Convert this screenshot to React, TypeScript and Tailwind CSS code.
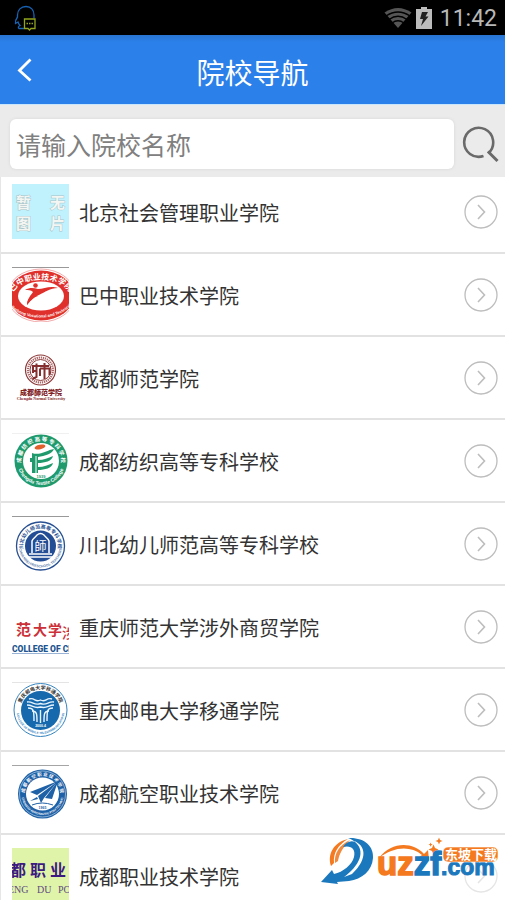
import type { ReactNode } from 'react'

type RingTextProps = {
  id: string
  cx: number
  cy: number
  topRadius: number
  bottomRadius: number
  top: string
  bottom: string
  topFill: string
  bottomFill: string
  topSize: number
  bottomSize: number
}

const RingText = (p: RingTextProps) => (
  <g textAnchor="middle" fontWeight="700">
    <path
      id={`${p.id}-top`}
      fill="none"
      d={`M${p.cx} ${p.cy + p.topRadius}A${p.topRadius} ${p.topRadius} 0 0 1 ${p.cx} ${p.cy - p.topRadius}A${p.topRadius} ${p.topRadius} 0 0 1 ${p.cx} ${p.cy + p.topRadius}`}
    />
    <path
      id={`${p.id}-bottom`}
      fill="none"
      d={`M${p.cx - p.bottomRadius} ${p.cy}A${p.bottomRadius} ${p.bottomRadius} 0 0 0 ${p.cx + p.bottomRadius} ${p.cy}`}
    />
    <text fontFamily="Noto Sans CJK SC, sans-serif" fontSize={p.topSize} fill={p.topFill}>
      <textPath href={`#${p.id}-top`} startOffset="50%">
        {p.top}
      </textPath>
    </text>
    <text fontFamily="Liberation Sans, sans-serif" fontSize={p.bottomSize} fill={p.bottomFill}>
      <textPath href={`#${p.id}-bottom`} startOffset="50%">
        {p.bottom}
      </textPath>
    </text>
  </g>
)

const Logo = ({ children }: { children: ReactNode }) => (
  <svg viewBox="0 0 57 55" className="h-[55px] w-[57px] shrink-0" aria-hidden="true">
    {children}
  </svg>
)

const EmptyLogo = () => (
  <Logo>
    <rect width="57" height="55" fill="#c0f2fe" />
    <g fontFamily="Noto Sans CJK SC, sans-serif" fontSize="15" fontWeight="700">
      <g fill="#f3f6f2" stroke="#a9c3c8" strokeWidth="1" paintOrder="stroke">
        <text x="4" y="24">暂</text>
        <text x="38" y="24">无</text>
        <text x="4" y="45">图</text>
        <text x="38" y="45">片</text>
      </g>
    </g>
  </Logo>
)

const BazhongLogo = () => (
  <Logo>
    <path d="M0 .5h57" stroke="#999" />
    <ellipse cx="29" cy="28.500" rx="34" ry="26.500" fill="#fff" stroke="#e88" strokeWidth=".7" />
    <ellipse cx="29" cy="28.500" rx="32.500" ry="25" fill="#e0302c" />
    <ellipse cx="29" cy="29" rx="23" ry="14.500" fill="#fff" />
    <path id="bz-top" fill="none" d="M0 27C8 8 50 8 58 27" />
    <path id="bz-bottom" fill="none" d="M-3 38C10 55 48 55 61 36" />
    <text fontFamily="Noto Sans CJK SC, sans-serif" fontSize="8" fontWeight="700" fill="#fff" textAnchor="middle">
      <textPath href="#bz-top" startOffset="50%">巴中职业技术学院</textPath>
    </text>
    <text fontFamily="Liberation Sans, sans-serif" fontSize="4" fontWeight="700" fill="#fff" textAnchor="middle">
      <textPath href="#bz-bottom" startOffset="50%">Bazhong Vocational and Technical</textPath>
    </text>
    <circle cx="23.500" cy="18.500" r="2.300" fill="#e0302c" />
    <path d="M13 23C18 20 22 21 26 22C32 22 38 18 46 21C38 21 33 25 27 28C21 30 18 34 15 38C15 32 19 28 21 25C19 23 16 23 13 23Z" fill="#e0302c" />
    <path d="M15 38C15 33 19 29 23 27L26 29C20 31 18 35 15 38Z" fill="#e0302c" />
  </Logo>
)

const ShifanLogo = () => (
  <Logo>
    <circle cx="28.500" cy="20" r="15" fill="#fff" stroke="#8c3838" strokeWidth="1.200" />
    <circle cx="28.500" cy="20" r="12.500" fill="none" stroke="#a66" strokeWidth="2.200" strokeDasharray="1.300 .8" />
    <circle cx="28.500" cy="20" r="10.500" fill="#fff" stroke="#8c3838" strokeWidth="1" />
    <path d="M20 16H37M21 16V23M24.500 13.500V27L20.500 29M28 18.500H37.500V25M28 18.500V26M32.500 13V29M24 21H20" fill="none" stroke="#852f30" strokeWidth="2" />
    <g textAnchor="middle" fill="#7f2224">
      <text x="29" y="45" fontFamily="Noto Sans CJK SC, sans-serif" fontSize="7" fontWeight="900">成都師范学院</text>
      <text x="29" y="50" fontFamily="Liberation Serif, serif" fontSize="4" fontWeight="700">Chengdu Normal University</text>
    </g>
  </Logo>
)

const FangzhiLogo = () => (
  <Logo>
    <path d="M0 .5h57" stroke="#f0f0f0" />
    <circle cx="29" cy="28" r="26.500" fill="#1f9a6d" />
    <circle cx="29" cy="28" r="18" fill="#fff" />
    <RingText id="fz" cx={29} cy={28} topRadius={20} bottomRadius={24} top="成 都 纺 织 高 等 专 科 学 校" bottom="Chengdu Textile College" topFill="#fff" bottomFill="#fff" topSize={5.5} bottomSize={5} />
    <ellipse cx="28" cy="14" rx="5.500" ry="2.300" fill="#e2602b" transform="rotate(-12 28 14)" />
    <path d="M20 20C28 23 35 17 42 16C40 21 33 23 26 24V27C32 27 36 25 41 23C40 28 33 30 26 30V34C32 34 36 32 41 30C40 35 33 37 26 37V40H20V29H18V25H20Z" fill="#1f9a6d" />
    <path d="M24 23v17" stroke="#fff" strokeWidth="1" />
    <text x="29" y="45" textAnchor="middle" fontFamily="Liberation Sans, sans-serif" fontSize="4" fontWeight="700" fill="#1f9a6d">1939</text>
  </Logo>
)

const ChuanbeiLogo = () => (
  <Logo>
    <path d="M0 .5h57" stroke="#999" />
    <circle cx="28.500" cy="30" r="24" fill="#fff" stroke="#274f91" strokeWidth="1.300" />
    <circle cx="28.500" cy="30" r="15.500" fill="#234d94" />
    <RingText id="cb" cx={28.5} cy={30} topRadius={17.5} bottomRadius={21.5} top="川北幼儿师范高等专科学校" bottom="CHUANBEI PRESCHOOL TEACHERS" topFill="#274f91" bottomFill="#5f7fae" topSize={5} bottomSize={3.5} />
    <path d="M20 37V25C21 22 24 21 25 19Q28.500 16 32 19C33 21 36 22 37 25V37M17 38h23M16 41h25" fill="none" stroke="#fff" strokeWidth="1.500" />
    <text x="28.500" y="35" textAnchor="middle" fontFamily="Noto Sans CJK SC, sans-serif" fontSize="12" fill="#fff">師</text>
  </Logo>
)

const ShewaiLogo = () => (
  <Logo>
    <g fontFamily="Noto Sans CJK SC, sans-serif" fontWeight="700" fill="#cc3038">
      <text x="4" y="36" fontSize="15">范</text>
      <text x="21" y="36" fontSize="14">大</text>
      <text x="36" y="36" fontSize="14">学</text>
      <text x="50" y="39" fontSize="14" fontWeight="500">涉</text>
    </g>
    <text x="0" y="53" fontFamily="Roboto, sans-serif" fontSize="8.500" fontWeight="900" fill="#22558f">COLLEGE OF CH</text>
    <path d="M0 54.500h57" stroke="#7d9fcb" strokeWidth=".8" />
  </Logo>
)

const YoudianLogo = () => (
  <Logo>
    <path d="M0 .5h57" stroke="#e4e4e4" />
    <circle cx="28.500" cy="28" r="26.500" fill="#fff" stroke="#3483bf" strokeWidth="1" />
    <circle cx="28.500" cy="28.500" r="19.500" fill="#1769ad" />
    <RingText id="yd" cx={28.5} cy={28} topRadius={20.5} bottomRadius={24} top="重庆邮电大学移通学院" bottom="COLLEGE OF MOBILE TELECOMMUNICATIONS" topFill="#333" bottomFill="#3483bf" topSize={5} bottomSize={3} />
    <g fill="none" stroke="#e8f4ff" strokeWidth="1.400">
      <path d="M17 17C23 15 23 21 28.500 18C34 21 34 15 40 17" />
      <path d="M15 20C21 19 22 24 28.500 21.500C35 24 36 19 42 20" />
      <path d="M15 23C21 23 22 27 28.500 25C35 27 36 23 42 23" />
      <path d="M16 26C22 26 22 29 22 39M20 29C25 29 25 32 25 40M28.500 28V41M41 26C35 26 35 29 35 39M37 29C32 29 32 32 32 40" />
    </g>
    <text x="28.500" y="45" textAnchor="middle" fontFamily="Liberation Sans, sans-serif" fontSize="3.500" fontWeight="700" fill="#fff">2000.4</text>
  </Logo>
)

const HangkongLogo = () => (
  <Logo>
    <path d="M0 .5h57" stroke="#a5a5a5" />
    <circle cx="30.500" cy="29" r="24.500" fill="#1f61a6" />
    <circle cx="30.500" cy="29" r="23" fill="none" stroke="#cfe0f1" strokeWidth=".6" />
    <circle cx="30.500" cy="29" r="16.500" fill="#fff" />
    <RingText id="hk" cx={30.5} cy={29} topRadius={18} bottomRadius={21} top="成 都 航 空 职 业 技 术 学 院" bottom="CHENGDU AERONAUTIC POLYTECHNIC" topFill="#fff" bottomFill="#fff" topSize={4.5} bottomSize={3} />
    <path d="M46 16L18 27L25 30ZM46 16L26 31L29 38L32 33ZM46 16L33 33L40 34ZM25 32L18 36L26 34Z" fill="#1f61a6" />
    <path d="M20 40Q30 36 41 40" fill="none" stroke="#1f61a6" strokeWidth="1" />
    <text x="30.500" y="44" textAnchor="middle" fontFamily="Liberation Sans, sans-serif" fontSize="3.500" fontWeight="700" fill="#1f61a6">1965</text>
  </Logo>
)

const ZhiyeLogo = () => (
  <Logo>
    <rect width="57" height="55" fill="#e0f4a9" />
    <g fontFamily="Noto Sans CJK SC, sans-serif" fontWeight="700" fontSize="16" fill="#3d1a80">
      <text x="-2" y="28">都</text>
      <text x="18" y="28">职</text>
      <text x="38" y="28">业</text>
    </g>
    <g fontFamily="Liberation Serif, serif" fontSize="10" fill="#5e4a80">
      <text x="-4" y="45">ENG</text>
      <text x="25" y="45">DU</text>
      <text x="46" y="45">PO</text>
    </g>
  </Logo>
)

const schools = [
  { name: '北京社会管理职业学院', logo: <EmptyLogo /> },
  { name: '巴中职业技术学院', logo: <BazhongLogo /> },
  { name: '成都师范学院', logo: <ShifanLogo /> },
  { name: '成都纺织高等专科学校', logo: <FangzhiLogo /> },
  { name: '川北幼儿师范高等专科学校', logo: <ChuanbeiLogo /> },
  { name: '重庆师范大学涉外商贸学院', logo: <ShewaiLogo /> },
  { name: '重庆邮电大学移通学院', logo: <YoudianLogo /> },
  { name: '成都航空职业技术学院', logo: <HangkongLogo /> },
  { name: '成都职业技术学院', logo: <ZhiyeLogo /> },
]

const StatusBar = () => (
  <div className="flex h-[35px] shrink-0 items-center bg-black pr-2 pl-3.5">
    <svg viewBox="0 0 24 26" className="h-[26px] w-6" fill="none" aria-hidden="true">
      <path d="M20 13V10C20 5 17 1.500 12 1.500S3.500 5 3.500 10V12C2 14 1 16 1.500 18.500L4 17C4.500 19 5.500 20 6 20.500C4 21.500 4 23 5 23.500H10" stroke="#1763b5" strokeWidth="1.300" />
      <path d="M10.500 14H21V23.500H17L15.500 25L14 23.500H10.500Z" stroke="#93a51c" strokeWidth="1.300" />
      <path d="M12.500 18.500H19.500" stroke="#93a51c" strokeWidth="1.500" strokeDasharray="1.500 1" />
    </svg>
    <div className="ml-auto flex items-center">
      <svg viewBox="0 0 28 22" className="h-[22px] w-7" aria-hidden="true">
        <path d="M14 21L.5 5.500Q14-3.500 27.500 5.500Z" fill="#555" />
        <path d="M2 9Q14 1 26 9M5 12.500Q14 6 23 12.500M8 16Q14 11.500 20 16" fill="none" stroke="#000" strokeWidth="1.300" />
      </svg>
      <svg viewBox="0 0 16 22" className="ml-1 h-[22px] w-4" aria-hidden="true">
        <path d="M5 0H11V2H16V22H0V2H5Z" fill="#bcbcbc" />
        <path d="M6 5H12L9.500 9.500H12.500L5 19L7 12H4Z" fill="#222" />
      </svg>
      <span className="ml-2 pt-0.5 font-['Roboto',sans-serif] text-[23px] leading-none text-[#b8b8b8]">11:42</span>
    </div>
  </div>
)

const Watermark = () => (
  <svg viewBox="0 0 184 60" className="pointer-events-none absolute right-1 bottom-1 h-[60px] w-[184px]" aria-hidden="true">
    <rect width="184" height="60" fill="#fff" opacity=".6" />
    <path d="M14 30C10 18 17 6 31 3C21 9 16 17 17 27Z" fill="#f4791f" />
    <path d="M18 27C17 18 22 9 33 4C26 11 22 18 21 25Z" fill="#f08a3e" />
    <path d="M31 2C47 1 57 10 56 22C55 35 45 43 32 45L20 46L21 48L4 46L15 34L17 38C26 36 35 29 37 21C39 13 34 9 26 11C29 6 34 4 38 6C36 4 34 3 31 2Z" fill="#1c78bd" />
    <path d="M37 5C48 9 52 22 35 38L27 41C42 30 50 15 37 5Z" fill="#fff" />
    <path d="M62 22C74 6 95 5 107 18L111 14L112 24L101 22L105 19C93 9 76 11 62 22Z" fill="#f4791f" />
    <path d="M115 12l1.500-3.500 1.500 3.500 3.500 1.500-3.500 1.500-1.500 3.500-1.500-3.500-3.500-1.500ZM121 4l1-2.500 1 2.500 2.500 1-2.500 1-1 2.500-1-2.500-2.500-1ZM113 8l.6-1.500.6 1.500 1.500.6-1.500.6-.6 1.500-.6-1.500-1.500-.6Z" fill="#f4791f" />
    <g fontFamily="Liberation Sans, sans-serif" fontWeight="700">
      <text x="60" y="39" fontSize="33" fill="#f4791f" stroke="#f4791f" strokeWidth="1.500">
        uz<tspan fill="#1c78bd" stroke="#1c78bd">zf</tspan>
      </text>
      <text x="124" y="39" fontSize="23" fill="#1c78bd" stroke="#1c78bd" strokeWidth="1">.com</text>
    </g>
    <rect x="126" y="11" width="55" height="15" rx="5" fill="#f4791f" stroke="#fff" strokeWidth=".6" />
    <text x="128" y="23" fontFamily="Noto Sans CJK SC, sans-serif" fontSize="13" fontWeight="700" fill="#fff">东坡下载</text>
  </svg>
)

export default function App() {
  return (
    <div className="relative flex h-screen flex-col overflow-hidden bg-white font-['Noto_Sans_CJK_SC',sans-serif]">
      <StatusBar />

      <header className="grid h-[70px] shrink-0 grid-cols-[50px_1fr_50px] items-center border-b border-[#c9e6fb] bg-linear-to-b from-[#2874d2] to-[#2b80e9] to-10%">
        <button type="button" aria-label="返回" className="flex h-full items-center pl-4">
          <svg viewBox="0 0 18 24" className="h-6 w-[18px]" fill="none" stroke="#fff" strokeWidth="2.800" aria-hidden="true">
            <path d="M14.500 1.500L3.500 12.500L14.500 22.500" />
          </svg>
        </button>
        <h1 className="pt-1 text-center text-[28px] leading-8 text-white">院校导航</h1>
      </header>

      <form className="flex h-[72px] shrink-0 items-center bg-[#ebebeb] pt-2 pr-1.5 pb-0.5 pl-2.5" onSubmit={(e) => e.preventDefault()}>
        <input
          type="text"
          aria-label="院校名称"
          placeholder="请输入院校名称"
          className="h-[50px] min-w-0 flex-1 rounded-md bg-white px-1.5 text-[25px] text-gray-800 shadow-[0_0_3px_#d4d4d4] outline-none placeholder:text-[#808080]"
        />
        <button type="submit" aria-label="搜索" className="ml-2">
          <svg viewBox="0 0 37 38" className="h-[38px] w-[37px]" fill="none" stroke="#6a6a6a" aria-hidden="true">
            <path d="M21.500 31A14.500 14.500 0 1 1 26.500 28L27 27" strokeWidth="2.600" />
            <path d="M26 26.500L35.500 36" strokeWidth="3" />
          </svg>
        </button>
      </form>

      <ul className="min-h-0 flex-1 overflow-y-auto border-l border-[#e6e6e6] [scrollbar-width:none]">
        {schools.map((school) => (
          <li key={school.name} className="border-b-2 border-[#e2e2e2]">
            <a href="#" className="flex items-center py-[13px] pr-1.5 pl-[11px] [li:first-child>&]:pt-[7px]">
              {school.logo}
              <span className="ml-2.5 flex-1 pt-0.5 text-[20px] leading-6 text-[#333]">{school.name}</span>
              <svg viewBox="0 0 36 36" className="size-9 shrink-0" fill="none" stroke="#bdbdbd" aria-hidden="true">
                <circle cx="18" cy="18" r="16" strokeWidth="1.300" />
                <path d="M15 11L21.500 18L15 25" strokeWidth="1.600" />
              </svg>
            </a>
          </li>
        ))}
      </ul>

      <Watermark />
    </div>
  )
}
